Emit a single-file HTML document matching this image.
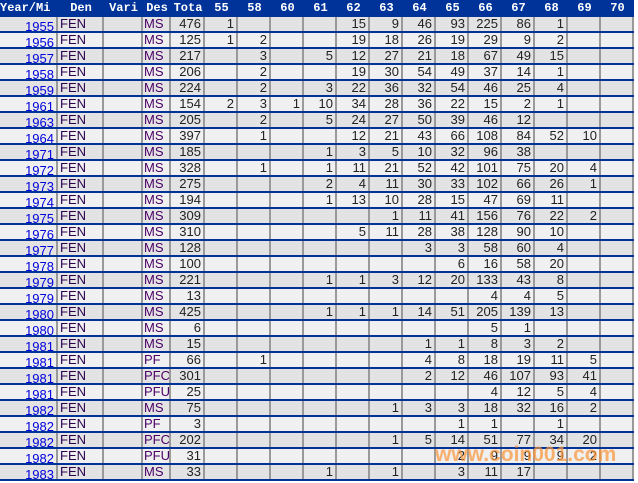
<!DOCTYPE html>
<html><head><meta charset="utf-8"><style>
body{margin:0;background:#fff;width:638px;height:483px;overflow:hidden;position:relative}
.h{display:flex;height:17px;background:#00339a;width:634px}
.h div{box-sizing:border-box;color:#fff;font:bold 12px/16px "Liberation Mono",monospace;text-align:center;white-space:nowrap;overflow:hidden}
.r{display:flex;height:16px;border-bottom:2px solid #00339a;box-sizing:border-box;background:#e3e3e3;width:634px}
.r div{box-sizing:border-box;border-right:2px solid #9a9a9a;text-align:right;padding-right:2px;font:13px/14px "Liberation Sans",sans-serif;color:#222;white-space:nowrap;overflow:hidden}
.r div:nth-child(1){color:#0000dd;text-decoration:underline;padding-top:3px;line-height:14px}
.r div:nth-child(2){text-align:left;color:#2a0050;padding-left:2px}
.r div:nth-child(4){text-align:left;color:#4a0066;padding-left:1px}
.w0{width:58px}.w1{width:46px}.w2{width:39px}.w3{width:28px}.w4{width:34px}
.r div:nth-child(n+6),.h div:nth-child(n+6){width:33px}
.wm{position:absolute;left:435px;top:443px;font:bold 21px "Liberation Sans",sans-serif;color:rgba(250,150,60,.72)}
</style></head><body>
<div class="h"><div class="w0" style="text-align:left">Year/Mi</div><div class="w1">Den</div><div class="w2">Vari</div><div class="w3">Des</div><div class="w4">Tota</div><div>55</div><div>58</div><div>60</div><div>61</div><div>62</div><div>63</div><div>64</div><div>65</div><div>66</div><div>67</div><div>68</div><div>69</div><div>70</div></div>
<div id="t">
<div class="r" style="background:#e3e3e3"><div class="w0">1955</div><div class="w1">FEN</div><div class="w2"></div><div class="w3">MS</div><div class="w4">476</div><div>1</div><div></div><div></div><div></div><div>15</div><div>9</div><div>46</div><div>93</div><div>225</div><div>86</div><div>1</div><div></div><div></div></div>
<div class="r" style="background:#f0f0f0"><div class="w0">1956</div><div class="w1">FEN</div><div class="w2"></div><div class="w3">MS</div><div class="w4">125</div><div>1</div><div>2</div><div></div><div></div><div>19</div><div>18</div><div>26</div><div>19</div><div>29</div><div>9</div><div>2</div><div></div><div></div></div>
<div class="r" style="background:#e3e3e3"><div class="w0">1957</div><div class="w1">FEN</div><div class="w2"></div><div class="w3">MS</div><div class="w4">217</div><div></div><div>3</div><div></div><div>5</div><div>12</div><div>27</div><div>21</div><div>18</div><div>67</div><div>49</div><div>15</div><div></div><div></div></div>
<div class="r" style="background:#f0f0f0"><div class="w0">1958</div><div class="w1">FEN</div><div class="w2"></div><div class="w3">MS</div><div class="w4">206</div><div></div><div>2</div><div></div><div></div><div>19</div><div>30</div><div>54</div><div>49</div><div>37</div><div>14</div><div>1</div><div></div><div></div></div>
<div class="r" style="background:#e3e3e3"><div class="w0">1959</div><div class="w1">FEN</div><div class="w2"></div><div class="w3">MS</div><div class="w4">224</div><div></div><div>2</div><div></div><div>3</div><div>22</div><div>36</div><div>32</div><div>54</div><div>46</div><div>25</div><div>4</div><div></div><div></div></div>
<div class="r" style="background:#f0f0f0"><div class="w0">1961</div><div class="w1">FEN</div><div class="w2"></div><div class="w3">MS</div><div class="w4">154</div><div>2</div><div>3</div><div>1</div><div>10</div><div>34</div><div>28</div><div>36</div><div>22</div><div>15</div><div>2</div><div>1</div><div></div><div></div></div>
<div class="r" style="background:#e3e3e3"><div class="w0">1963</div><div class="w1">FEN</div><div class="w2"></div><div class="w3">MS</div><div class="w4">205</div><div></div><div>2</div><div></div><div>5</div><div>24</div><div>27</div><div>50</div><div>39</div><div>46</div><div>12</div><div></div><div></div><div></div></div>
<div class="r" style="background:#f0f0f0"><div class="w0">1964</div><div class="w1">FEN</div><div class="w2"></div><div class="w3">MS</div><div class="w4">397</div><div></div><div>1</div><div></div><div></div><div>12</div><div>21</div><div>43</div><div>66</div><div>108</div><div>84</div><div>52</div><div>10</div><div></div></div>
<div class="r" style="background:#e3e3e3"><div class="w0">1971</div><div class="w1">FEN</div><div class="w2"></div><div class="w3">MS</div><div class="w4">185</div><div></div><div></div><div></div><div>1</div><div>3</div><div>5</div><div>10</div><div>32</div><div>96</div><div>38</div><div></div><div></div><div></div></div>
<div class="r" style="background:#f0f0f0"><div class="w0">1972</div><div class="w1">FEN</div><div class="w2"></div><div class="w3">MS</div><div class="w4">328</div><div></div><div>1</div><div></div><div>1</div><div>11</div><div>21</div><div>52</div><div>42</div><div>101</div><div>75</div><div>20</div><div>4</div><div></div></div>
<div class="r" style="background:#e3e3e3"><div class="w0">1973</div><div class="w1">FEN</div><div class="w2"></div><div class="w3">MS</div><div class="w4">275</div><div></div><div></div><div></div><div>2</div><div>4</div><div>11</div><div>30</div><div>33</div><div>102</div><div>66</div><div>26</div><div>1</div><div></div></div>
<div class="r" style="background:#f0f0f0"><div class="w0">1974</div><div class="w1">FEN</div><div class="w2"></div><div class="w3">MS</div><div class="w4">194</div><div></div><div></div><div></div><div>1</div><div>13</div><div>10</div><div>28</div><div>15</div><div>47</div><div>69</div><div>11</div><div></div><div></div></div>
<div class="r" style="background:#e3e3e3"><div class="w0">1975</div><div class="w1">FEN</div><div class="w2"></div><div class="w3">MS</div><div class="w4">309</div><div></div><div></div><div></div><div></div><div></div><div>1</div><div>11</div><div>41</div><div>156</div><div>76</div><div>22</div><div>2</div><div></div></div>
<div class="r" style="background:#f0f0f0"><div class="w0">1976</div><div class="w1">FEN</div><div class="w2"></div><div class="w3">MS</div><div class="w4">310</div><div></div><div></div><div></div><div></div><div>5</div><div>11</div><div>28</div><div>38</div><div>128</div><div>90</div><div>10</div><div></div><div></div></div>
<div class="r" style="background:#e3e3e3"><div class="w0">1977</div><div class="w1">FEN</div><div class="w2"></div><div class="w3">MS</div><div class="w4">128</div><div></div><div></div><div></div><div></div><div></div><div></div><div>3</div><div>3</div><div>58</div><div>60</div><div>4</div><div></div><div></div></div>
<div class="r" style="background:#f0f0f0"><div class="w0">1978</div><div class="w1">FEN</div><div class="w2"></div><div class="w3">MS</div><div class="w4">100</div><div></div><div></div><div></div><div></div><div></div><div></div><div></div><div>6</div><div>16</div><div>58</div><div>20</div><div></div><div></div></div>
<div class="r" style="background:#e3e3e3"><div class="w0">1979</div><div class="w1">FEN</div><div class="w2"></div><div class="w3">MS</div><div class="w4">221</div><div></div><div></div><div></div><div>1</div><div>1</div><div>3</div><div>12</div><div>20</div><div>133</div><div>43</div><div>8</div><div></div><div></div></div>
<div class="r" style="background:#f0f0f0"><div class="w0">1979</div><div class="w1">FEN</div><div class="w2"></div><div class="w3">MS</div><div class="w4">13</div><div></div><div></div><div></div><div></div><div></div><div></div><div></div><div></div><div>4</div><div>4</div><div>5</div><div></div><div></div></div>
<div class="r" style="background:#e3e3e3"><div class="w0">1980</div><div class="w1">FEN</div><div class="w2"></div><div class="w3">MS</div><div class="w4">425</div><div></div><div></div><div></div><div>1</div><div>1</div><div>1</div><div>14</div><div>51</div><div>205</div><div>139</div><div>13</div><div></div><div></div></div>
<div class="r" style="background:#f0f0f0"><div class="w0">1980</div><div class="w1">FEN</div><div class="w2"></div><div class="w3">MS</div><div class="w4">6</div><div></div><div></div><div></div><div></div><div></div><div></div><div></div><div></div><div>5</div><div>1</div><div></div><div></div><div></div></div>
<div class="r" style="background:#e3e3e3"><div class="w0">1981</div><div class="w1">FEN</div><div class="w2"></div><div class="w3">MS</div><div class="w4">15</div><div></div><div></div><div></div><div></div><div></div><div></div><div>1</div><div>1</div><div>8</div><div>3</div><div>2</div><div></div><div></div></div>
<div class="r" style="background:#f0f0f0"><div class="w0">1981</div><div class="w1">FEN</div><div class="w2"></div><div class="w3">PF</div><div class="w4">66</div><div></div><div>1</div><div></div><div></div><div></div><div></div><div>4</div><div>8</div><div>18</div><div>19</div><div>11</div><div>5</div><div></div></div>
<div class="r" style="background:#e3e3e3"><div class="w0">1981</div><div class="w1">FEN</div><div class="w2"></div><div class="w3">PFC</div><div class="w4">301</div><div></div><div></div><div></div><div></div><div></div><div></div><div>2</div><div>12</div><div>46</div><div>107</div><div>93</div><div>41</div><div></div></div>
<div class="r" style="background:#f0f0f0"><div class="w0">1981</div><div class="w1">FEN</div><div class="w2"></div><div class="w3">PFU</div><div class="w4">25</div><div></div><div></div><div></div><div></div><div></div><div></div><div></div><div></div><div>4</div><div>12</div><div>5</div><div>4</div><div></div></div>
<div class="r" style="background:#e3e3e3"><div class="w0">1982</div><div class="w1">FEN</div><div class="w2"></div><div class="w3">MS</div><div class="w4">75</div><div></div><div></div><div></div><div></div><div></div><div>1</div><div>3</div><div>3</div><div>18</div><div>32</div><div>16</div><div>2</div><div></div></div>
<div class="r" style="background:#f0f0f0"><div class="w0">1982</div><div class="w1">FEN</div><div class="w2"></div><div class="w3">PF</div><div class="w4">3</div><div></div><div></div><div></div><div></div><div></div><div></div><div></div><div>1</div><div>1</div><div></div><div>1</div><div></div><div></div></div>
<div class="r" style="background:#e3e3e3"><div class="w0">1982</div><div class="w1">FEN</div><div class="w2"></div><div class="w3">PFC</div><div class="w4">202</div><div></div><div></div><div></div><div></div><div></div><div>1</div><div>5</div><div>14</div><div>51</div><div>77</div><div>34</div><div>20</div><div></div></div>
<div class="r" style="background:#f0f0f0"><div class="w0">1982</div><div class="w1">FEN</div><div class="w2"></div><div class="w3">PFU</div><div class="w4">31</div><div></div><div></div><div></div><div></div><div></div><div></div><div></div><div>2</div><div>9</div><div>9</div><div>9</div><div>2</div><div></div></div>
<div class="r" style="background:#e3e3e3"><div class="w0">1983</div><div class="w1">FEN</div><div class="w2"></div><div class="w3">MS</div><div class="w4">33</div><div></div><div></div><div></div><div>1</div><div></div><div>1</div><div></div><div>3</div><div>11</div><div>17</div><div></div><div></div><div></div></div>
</div>
<div class="wm">www.coin001.com</div>
</body></html>
